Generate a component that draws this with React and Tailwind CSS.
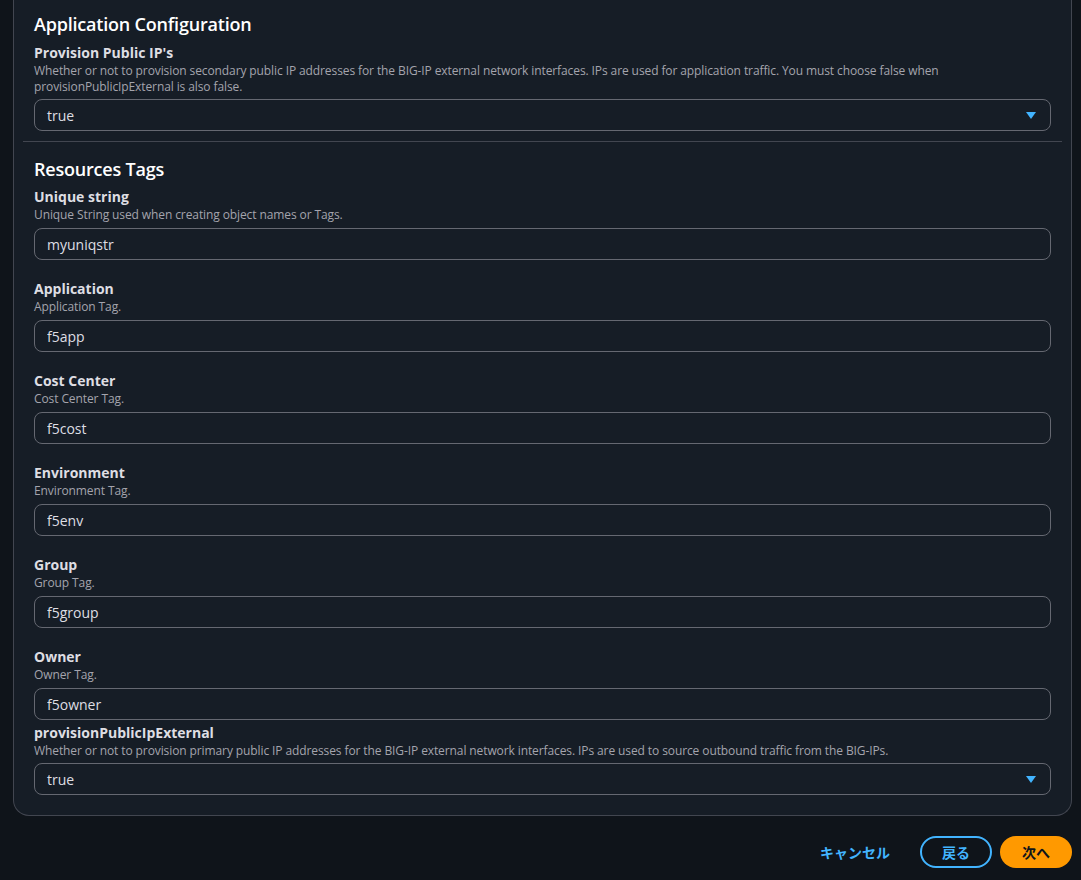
import { useState } from 'react'

const FONT = '"Open Sans", "Noto Sans", "Noto Sans CJK JP", sans-serif'

const tags = [
  { label: 'Unique string', desc: 'Unique String used when creating object names or Tags.', value: 'myuniqstr' },
  { label: 'Application', desc: 'Application Tag.', value: 'f5app' },
  { label: 'Cost Center', desc: 'Cost Center Tag.', value: 'f5cost' },
  { label: 'Environment', desc: 'Environment Tag.', value: 'f5env' },
  { label: 'Group', desc: 'Group Tag.', value: 'f5group' },
  { label: 'Owner', desc: 'Owner Tag.', value: 'f5owner' },
]

function FieldHead({ label, desc }) {
  return (
    <div className="flex flex-col">
      <div className="text-[14px] leading-[18px] font-bold text-[#dedee3]">{label}</div>
      <div className="mt-px text-[12px] leading-[16px] tracking-[-0.1px] text-[#a4a4ad]">{desc}</div>
    </div>
  )
}

function TextInput({ value }) {
  const [v, setV] = useState(value)
  return (
    <input
      value={v}
      onChange={e => setV(e.target.value)}
      className="mt-[5px] h-[32px] w-full rounded-[8px] border border-[#656871] bg-[#161d26] pl-3 pr-3 text-[14px] text-[#dedee3] outline-none"
      style={{ fontFamily: FONT }}
    />
  )
}

function Select({ value }) {
  return (
    <div className="mt-[4px] flex h-[32px] w-full items-center justify-between rounded-[8px] border border-[#656871] bg-[#161d26] pl-3 pr-[14px] text-[14px] text-[#dedee3]">
      <span>{value}</span>
      {/* caret */}
      <svg width="10" height="7" viewBox="0 0 10 7">
        <path d="M0 0h10L5 7z" fill="#42b4ff" />
      </svg>
    </div>
  )
}

export default function App() {
  return (
    <div className="min-h-[880px] w-full bg-[#0f141a]" style={{ fontFamily: FONT }}>
      <div className="ml-[13px] mr-[9px] rounded-b-[16px] border-x border-b border-[#424650] bg-[#161d26] px-5 pb-[20px] pt-[13px]">
        {/* Application Configuration */}
        <h2 className="text-[18px] leading-[22px] font-semibold tracking-[-0.2px] text-white">Application Configuration</h2>
        <div className="mt-[9px]">
          <FieldHead
            label="Provision Public IP's"
            desc="Whether or not to provision secondary public IP addresses for the BIG-IP external network interfaces. IPs are used for application traffic. You must choose false when provisionPublicIpExternal is also false."
          />
          <Select value="true" />
        </div>

        <div className="-mx-[11px] mt-[10px] h-px bg-[#424650]" />

        {/* Resources Tags */}
        <h2 className="mt-[16px] text-[18px] leading-[22px] font-semibold tracking-[-0.2px] text-white">Resources Tags</h2>
        <div className="mt-[8px] flex flex-col gap-[20px]">
          {tags.map(t => (
            <div key={t.label}>
              <FieldHead label={t.label} desc={t.desc} />
              <TextInput value={t.value} />
            </div>
          ))}
        </div>
        <div className="mt-[4px]">
          <FieldHead
            label="provisionPublicIpExternal"
            desc="Whether or not to provision primary public IP addresses for the BIG-IP external network interfaces. IPs are used to source outbound traffic from the BIG-IPs."
          />
          <Select value="true" />
        </div>
      </div>

      {/* Footer actions */}
      <div className="mr-[9px] mt-[20px] flex items-center justify-end gap-2">
        <button className="h-[32px] px-[22px] text-[14px] font-bold text-[#42b4ff]">キャンセル</button>
        <button className="h-[32px] w-[72px] rounded-full border-2 border-[#42b4ff] text-[14px] font-bold text-[#42b4ff]">戻る</button>
        <button className="h-[32px] w-[72px] rounded-full bg-[#ff9900] text-[14px] font-bold text-[#0f141a]">次へ</button>
      </div>
    </div>
  )
}
